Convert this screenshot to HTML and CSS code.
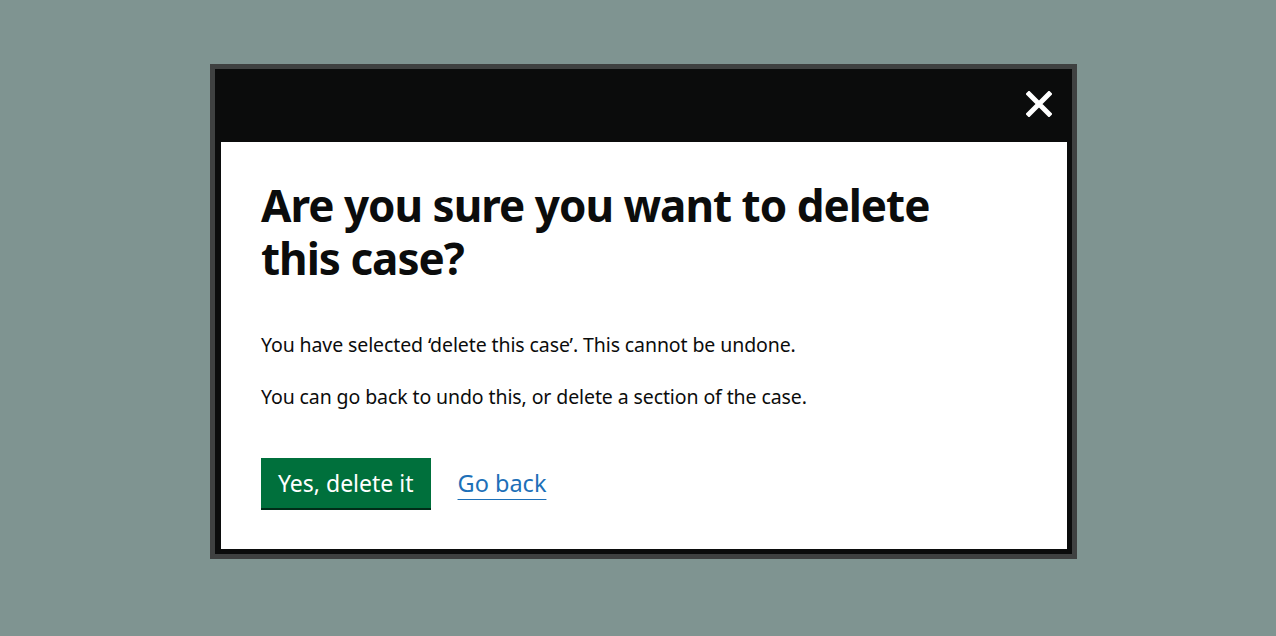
FILE: index.html
```html
<!DOCTYPE html>
<html lang="en">
<head>
<meta charset="utf-8">
<title>Delete case</title>
<link rel="stylesheet" href="styles.css">
</head>
<body>
<div class="page">
  <div class="dialog" role="dialog" aria-labelledby="dlg-title">
    <div class="dialog-bar">
      <button class="close" type="button" aria-label="Close">
        <svg width="26" height="26" viewBox="0 0 26 26" aria-hidden="true">
          <path d="M3 3 L23 23 M23 3 L3 23" stroke="#ffffff" stroke-width="5" stroke-linecap="square" fill="none"/>
        </svg>
      </button>
    </div>
    <div class="dialog-body">
      <h1 id="dlg-title" class="heading">Are you sure you want to delete this case?</h1>
      <p class="body-text">You have selected ‘delete this case’. This cannot be undone.</p>
      <p class="body-text">You can go back to undo this, or delete a section of the case.</p>
      <div class="actions">
        <button class="btn-warning" type="button">Yes, delete it</button>
        <a class="link" href="#">Go back</a>
      </div>
    </div>
  </div>
</div>
</body>
</html>
```

FILE: styles.css
```css
html, body {
  margin: 0;
  padding: 0;
}
body {
  background: #7f9491;
  font-family: "Noto Sans", "Liberation Sans", sans-serif;
  color: #0b0c0c;
  width: 1276px;
  height: 636px;
  overflow: hidden;
}
.page {
  padding: 64px 0 0 210px;
}
.dialog {
  border: 5px solid #3f4141;
  background: #0b0c0c;
  padding: 0 5px 5px 6px;
  box-sizing: content-box;
  width: 846px;
}
.dialog-bar {
  height: 73px;
  box-sizing: border-box;
  display: flex;
  justify-content: flex-end;
  align-items: center;
  padding: 0 15px 4px 0;
}
.close {
  background: none;
  border: 0;
  padding: 0;
  margin: 0;
  width: 26px;
  height: 26px;
  display: block;
  cursor: pointer;
}
.close svg { display: block; }
.dialog-body {
  background: #ffffff;
  height: 407px;
  box-sizing: border-box;
  padding: 37px 40px 0 40px;
}
.heading {
  margin: 0 0 47px 0;
  font-size: 44px;
  line-height: 53px;
  font-weight: 700;
  letter-spacing: -1px;
  width: 720px;
}
.body-text {
  margin: 0 0 26px 0;
  font-size: 19.5px;
  line-height: 26px;
  letter-spacing: -0.1px;
}
.actions {
  display: flex;
  align-items: center;
  gap: 27px;
  margin-top: 48px;
}
.btn-warning {
  background: #00703c;
  color: #ffffff;
  border: 0;
  box-shadow: 0 2px 0 #002d18;
  font-family: inherit;
  font-size: 23px;
  line-height: 26px;
  padding: 12px 17px;
  margin: 0;
  height: 50px;
}
.link {
  color: #1d70b8;
  font-size: 23.5px;
  text-decoration: underline;
  text-underline-offset: 7px;
  text-decoration-thickness: 1px;
}
```
